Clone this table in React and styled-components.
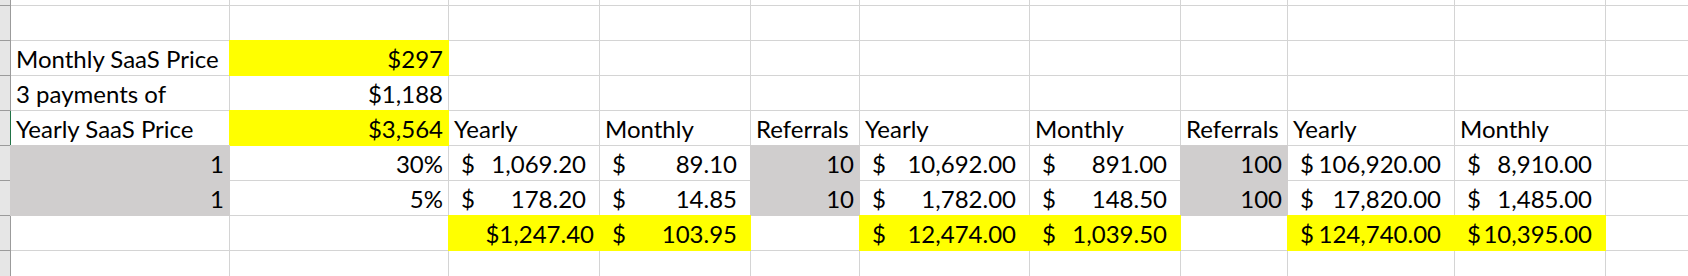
import React from "react";
import styled, { createGlobalStyle, css } from "styled-components";

const GRID = "#d4d4d4";
const HEAD_LINE = "#9b9b9b";
const FILLS = {
  yellow: "#ffff00",
  gray: "#d0cece",
};

const GlobalStyle = createGlobalStyle`
  html, body {
    margin: 0;
    background: #ffffff;
    overflow: hidden;
  }
`;

const Sheet = styled.div`
  display: grid;
  grid-template-columns: 10px 218px 218px 150px 150px 108px 169px 150px 106px 166px 150px 1fr;
  grid-template-rows: 5px repeat(8, 34px);
  gap: 1px;
  background: ${GRID};
  font-family: Lato, "Liberation Sans", sans-serif;
  font-size: 24px;
  color: #000000;
`;

const RowHead = styled.div`
  background: #e6e6e6;
  box-shadow:
    1px 0 0 ${({ $active }) => ($active ? "#217346" : HEAD_LINE)},
    0 1px 0 ${HEAD_LINE},
    1px 1px 0 ${HEAD_LINE};
`;

const Cell = styled.div`
  display: flex;
  justify-content: ${({ $align }) => ($align === "right" ? "flex-end" : "flex-start")};
  padding: 0 5px;
  line-height: 33px;
  padding-top: 1px;
  white-space: nowrap;
  overflow: visible;
  background: ${({ $fill }) => FILLS[$fill] || "#ffffff"};
  ${({ $fill }) =>
    $fill &&
    css`
      box-shadow: 0 0 0 1px ${FILLS[$fill]};
    `}
`;

const AcctCell = styled(Cell)`
  justify-content: space-between;
  padding-left: 12px;
  padding-right: 13px;
`;

// column order: A..K
const acct = (n, fill) => ({ acct: n, fill });
const num = (v, fill) => ({ v, align: "right", fill });
const txt = (v) => ({ v });

const rows = [
  [],
  [],
  [txt("Monthly SaaS Price"), num("$297", "yellow")],
  [txt("3 payments of"), num("$1,188")],
  [
    txt("Yearly SaaS Price"),
    num("$3,564", "yellow"),
    txt("Yearly"),
    txt("Monthly"),
    txt("Referrals"),
    txt("Yearly"),
    txt("Monthly"),
    txt("Referrals"),
    txt("Yearly"),
    txt("Monthly"),
  ],
  [
    num("1", "gray"),
    num("30%"),
    acct("1,069.20"),
    acct("89.10"),
    num("10", "gray"),
    acct("10,692.00"),
    acct("891.00"),
    num("100", "gray"),
    acct("106,920.00"),
    acct("8,910.00"),
  ],
  [
    num("1", "gray"),
    num("5%"),
    acct("178.20"),
    acct("14.85"),
    num("10", "gray"),
    acct("1,782.00"),
    acct("148.50"),
    num("100", "gray"),
    acct("17,820.00"),
    acct("1,485.00"),
  ],
  [
    {},
    {},
    num("$1,247.40", "yellow"),
    acct("103.95", "yellow"),
    {},
    acct("12,474.00", "yellow"),
    acct("1,039.50", "yellow"),
    {},
    acct("124,740.00", "yellow"),
    acct("10,395.00", "yellow"),
  ],
  [],
];

const COLS = 11;
const ACTIVE_ROW = 4;

function SheetCell({ cell }) {
  if (cell.acct) {
    return (
      <AcctCell $fill={cell.fill}>
        <span>$</span>
        <span>{cell.acct}</span>
      </AcctCell>
    );
  }
  return (
    <Cell $fill={cell.fill} $align={cell.align}>
      {cell.v}
    </Cell>
  );
}

export default function App() {
  return (
    <>
      <GlobalStyle />
      <Sheet>
        {rows.map((row, r) => (
          <React.Fragment key={r}>
            <RowHead $active={r === ACTIVE_ROW} />
            {Array.from({ length: COLS }, (_, c) => (
              <SheetCell key={c} cell={row[c] || {}} />
            ))}
          </React.Fragment>
        ))}
      </Sheet>
    </>
  );
}
